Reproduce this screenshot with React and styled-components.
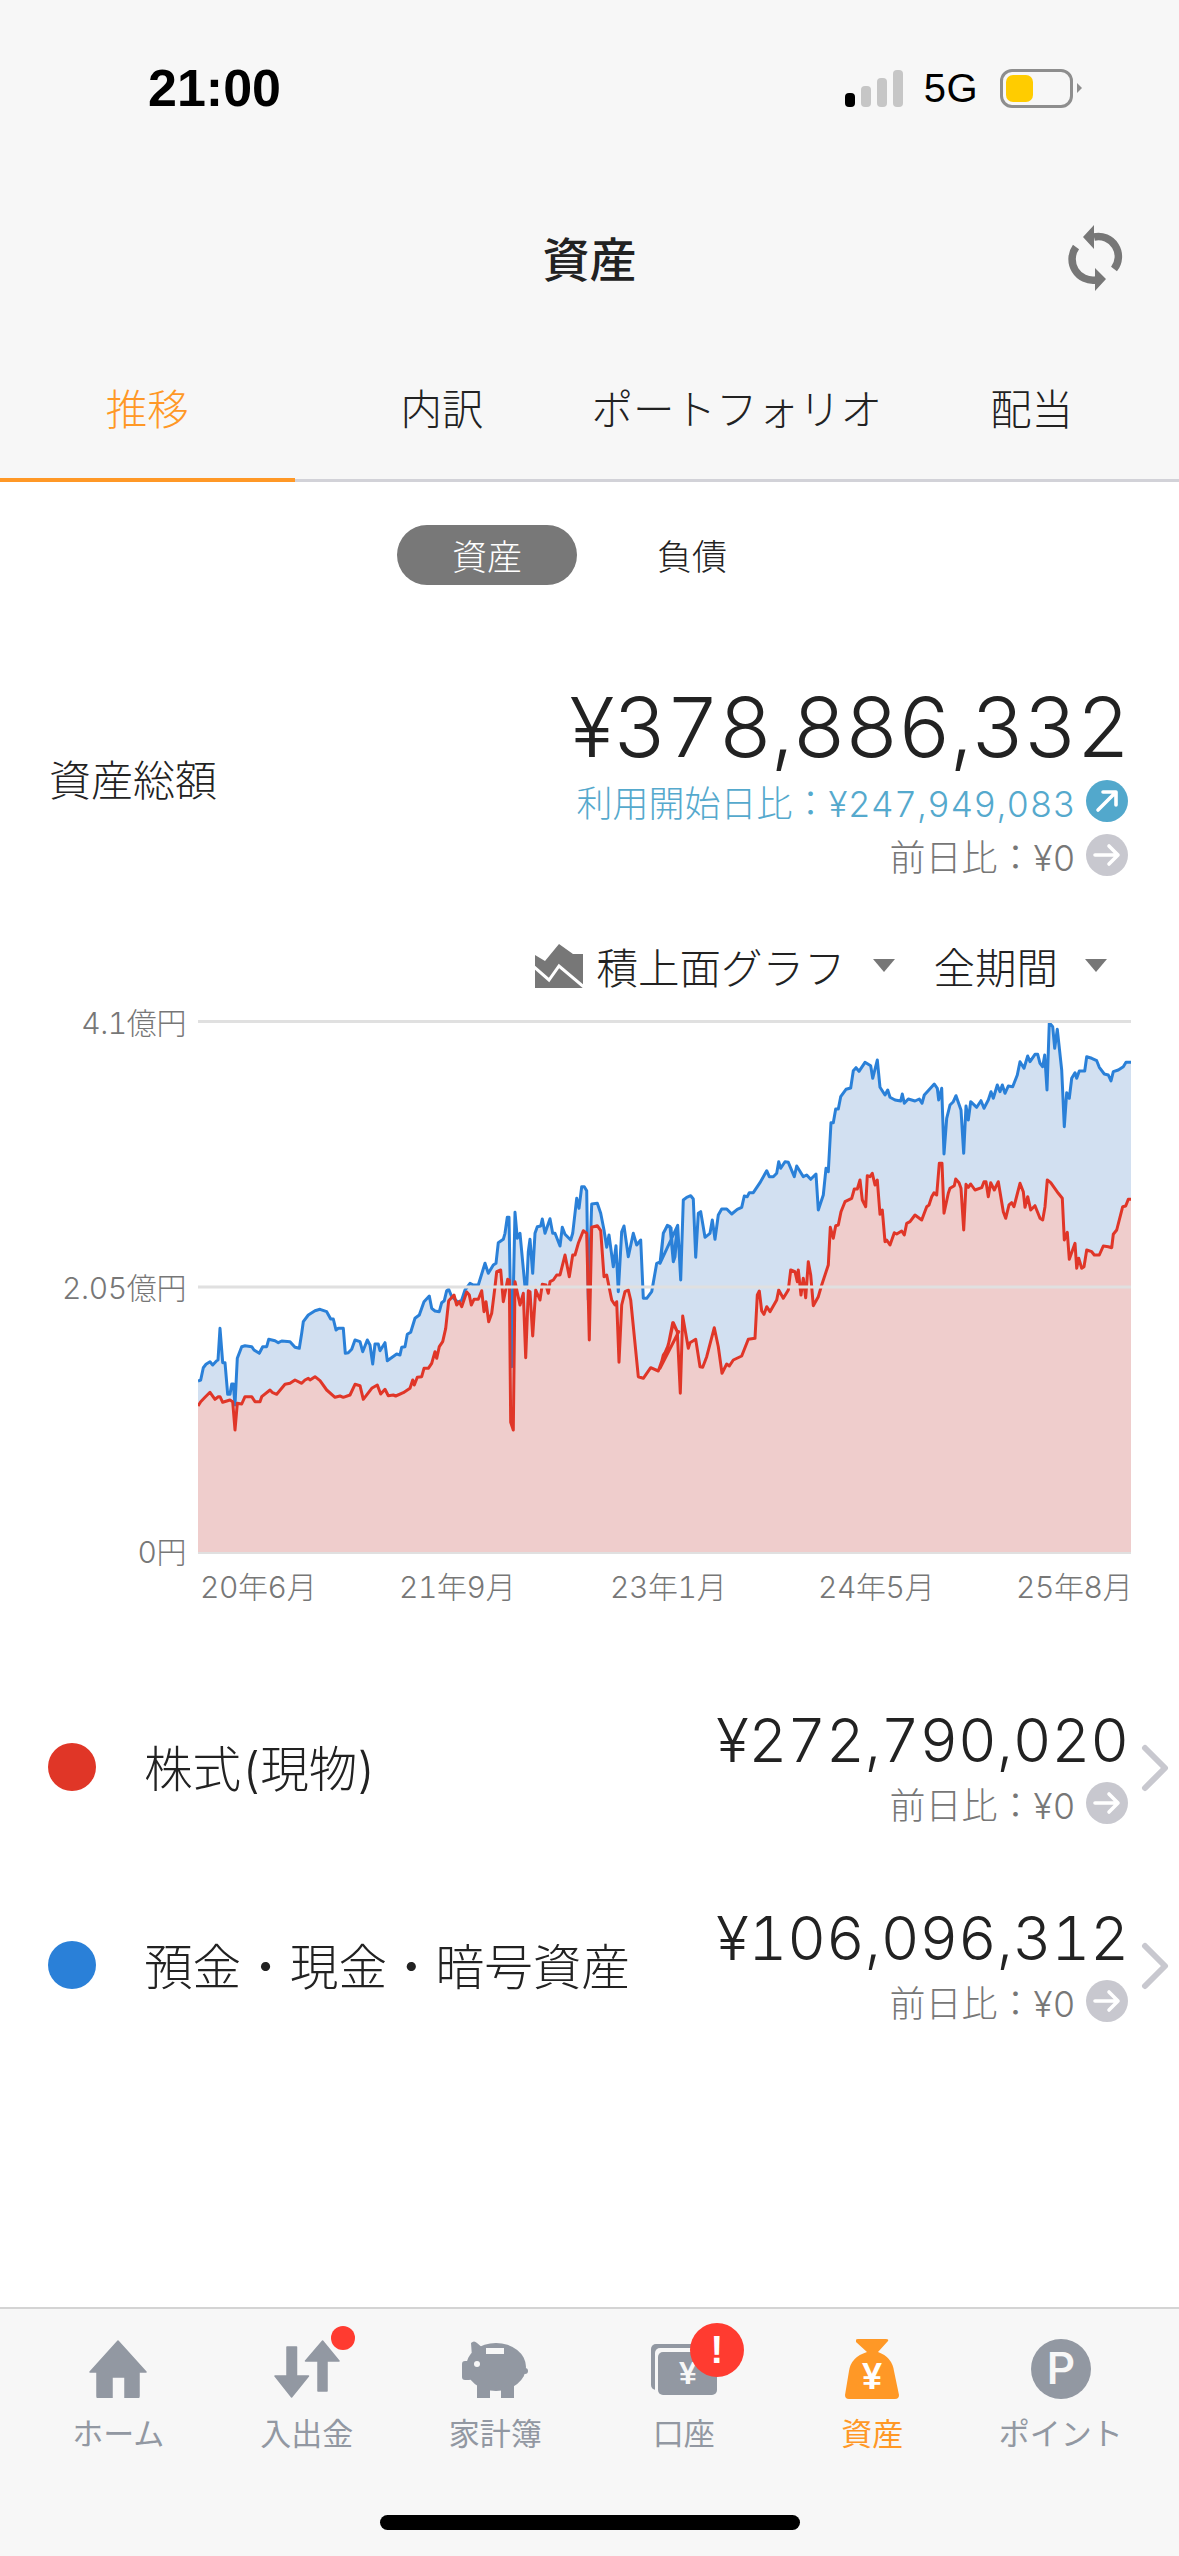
import React from "react";
import styled, { createGlobalStyle } from "styled-components";

const FONT = `Inter, "Noto Sans CJK JP", sans-serif`;
const GREY_ICON = "#9298a2";
const ORANGE = "#ff9826";
const BAR_BG = "#f7f7f7";

const Global = createGlobalStyle`
  html, body { margin: 0; padding: 0; background: #fff; }
  body { font-family: ${FONT}; font-weight: 300; color: #222; font-variant-numeric: tabular-nums; }
  * { box-sizing: border-box; }
`;

const Page = styled.div`
  width: 1179px;
  height: 2556px;
  display: flex;
  flex-direction: column;
  overflow: hidden;
  background: #fff;
`;

/* ---------- status bar ---------- */
const StatusBar = styled.div`
  height: 176px;
  flex: none;
  background: ${BAR_BG};
  display: flex;
  align-items: center;
  padding: 0 106px 0 148px;
`;
const Clock = styled.div`
  font-family: "Liberation Sans", sans-serif;
  font-weight: 700;
  font-size: 52px;
  color: #000;
  margin-right: auto;
`;
const Signal = styled.div`
  display: flex;
  align-items: flex-end;
  gap: 6px;
  height: 37px;
`;
const SignalBar = styled.span`
  width: 10px;
  height: ${(p) => p.$h}px;
  border-radius: 4px;
  background: ${(p) => (p.$on ? "#000" : "#c6c6c6")};
`;
const Network = styled.div`
  font-family: "Liberation Sans", sans-serif;
  font-size: 40px;
  letter-spacing: 0.5px;
  color: #000;
  margin: 0 22px 0 21px;
`;
const Battery = styled.div`
  width: 73px;
  height: 39px;
  border: 3px solid #8e8e8e;
  border-radius: 12px;
  padding: 3px;
  position: relative;
  &::after {
    content: "";
    position: absolute;
    left: 74px;
    top: 11px;
    border-left: 5px solid #8e8e8e;
    border-top: 5px solid transparent;
    border-bottom: 5px solid transparent;
  }
`;
const BatteryFill = styled.div`
  width: 27px;
  height: 27px;
  border-radius: 7px;
  background: #ffcc00;
`;

/* ---------- title ---------- */
const TitleBar = styled.div`
  height: 160px;
  flex: none;
  background: ${BAR_BG};
  display: grid;
  grid-template-columns: 1fr auto 1fr;
  align-items: center;
  padding: 0 39px;
`;
const Title = styled.h1`
  grid-column: 2;
  margin: 0;
  font-size: 47px;
  font-weight: 500;
  color: #222;
`;
const RefreshBtn = styled.svg`
  grid-column: 3;
  justify-self: end;
  width: 90px;
  height: 90px;
`;

/* ---------- tabs ---------- */
const Tabs = styled.div`
  height: 146px;
  flex: none;
  background: ${BAR_BG};
  display: grid;
  grid-template-columns: repeat(4, 1fr);
  border-bottom: 3px solid #d2d2d8;
`;
const Tab = styled.div`
  display: flex;
  align-items: center;
  justify-content: center;
  font-size: 41.5px;
  height: 146px;
  padding-bottom: 1px;
  white-space: nowrap;
  color: ${(p) => (p.$active ? ORANGE : "#222")};
  border-bottom: 4px solid ${(p) => (p.$active ? ORANGE : "transparent")};
`;

/* ---------- segmented ---------- */
const Segments = styled.div`
  display: flex;
  justify-content: center;
  gap: 25px;
  margin-top: 43px;
`;
const Segment = styled.div`
  width: 180px;
  height: 60px;
  padding-bottom: 2px;
  border-radius: 30px;
  display: flex;
  align-items: center;
  justify-content: center;
  font-size: 35px;
  color: ${(p) => (p.$active ? "#fff" : "#222")};
  background: ${(p) => (p.$active ? "#787878" : "transparent")};
`;

/* ---------- summary ---------- */
const Summary = styled.section`
  display: flex;
  align-items: center;
  justify-content: space-between;
  margin-top: 92px;
  padding: 0 51px 0 49px;
`;
const SummaryLabel = styled.div`
  font-size: 42px;
  color: #222;
`;
const SummaryRight = styled.div`
  display: flex;
  flex-direction: column;
  align-items: flex-end;
`;
const BigAmount = styled.div`
  font-size: 83px;
  line-height: 100px;
  letter-spacing: -1.1px;
  margin-right: -1px;
  white-space: nowrap;
  color: #222;
`;
const Delta = styled.div`
  display: flex;
  align-items: center;
  height: 46px;
  gap: 10px;
  font-size: 36px;
  white-space: nowrap;
  color: ${(p) => p.$color || "#777"};
  margin-top: ${(p) => p.$mt || 0}px;
`;
const Money = styled.span`
  font-size: 35px;
  letter-spacing: 0.5px;
`;
const DeltaCircle = styled.span`
  width: 42px;
  height: 42px;
  border-radius: 50%;
  background: ${(p) => p.$bg};
  display: flex;
  align-items: center;
  justify-content: center;
  flex: none;
`;

/* ---------- chart ---------- */
const Controls = styled.div`
  display: flex;
  align-items: center;
  justify-content: flex-end;
  height: 60px;
  margin-top: 59px;
  padding: 0 72px 3px 0;
  font-size: 41.5px;
  color: #222;
`;
const AreaIcon = styled.svg`
  width: 48px;
  height: 46px;
  margin-right: 13px;
`;
const Caret = styled.span`
  width: 0;
  height: 0;
  border-left: 11px solid transparent;
  border-right: 11px solid transparent;
  border-top: 13px solid #777;
  margin-left: ${(p) => p.$ml}px;
  margin-right: ${(p) => p.$mr}px;
`;
const ChartRow = styled.div`
  display: grid;
  grid-template-columns: 198px 933px;
  height: 561px;
  margin-top: 9px;
`;
const YAxis = styled.div`
  display: flex;
  flex-direction: column;
  justify-content: space-between;
  align-items: flex-end;
  padding: 2px 12px 0 0;
`;
const AxisText = styled.span`
  font-size: 30px;
  line-height: 30px;
  letter-spacing: -0.4px;
  color: #777;
  white-space: nowrap;
`;
const ChartSvg = styled.svg`
  width: 933px;
  height: 561px;
  display: block;
`;
const XAxis = styled.div`
  display: grid;
  grid-template-columns: 199px 211px 208px 198px auto;
  align-items: center;
  height: 40px;
  padding-left: 200px;
`;

/* ---------- asset rows ---------- */
const Assets = styled.div`
  margin-top: 59px;
`;
const AssetRow = styled.div`
  height: 198px;
  display: flex;
  align-items: center;
  padding: 0 10px 0 48px;
`;
const Dot = styled.span`
  width: 48px;
  height: 48px;
  margin-top: 4px;
  border-radius: 50%;
  flex: none;
  background: ${(p) => p.$color};
`;
const AssetName = styled.div`
  margin: 1px 0 0 48px;
  font-size: 48.6px;
  color: #222;
  white-space: nowrap;
`;
const AssetRight = styled.div`
  margin-left: auto;
  display: flex;
  flex-direction: column;
  align-items: flex-end;
`;
const AssetAmount = styled.div`
  font-size: 60px;
  line-height: 72px;
  letter-spacing: -0.1px;
  margin-right: -1px;
  white-space: nowrap;
  color: #222;
`;
const Chevron = styled.svg`
  width: 28px;
  height: 48px;
  margin: 6px 0 0 13px;
  flex: none;
`;

/* ---------- bottom nav ---------- */
const BottomNav = styled.nav`
  margin-top: auto;
  height: 249px;
  flex: none;
  background: ${BAR_BG};
  border-top: 2px solid #d4d4d4;
  display: flex;
  flex-direction: column;
  align-items: center;
  padding: 30px 24px 0;
`;
const NavItems = styled.div`
  width: 100%;
  display: grid;
  grid-template-columns: repeat(6, 1fr);
`;
const NavItem = styled.div`
  display: flex;
  flex-direction: column;
  align-items: center;
  color: ${(p) => (p.$active ? ORANGE : GREY_ICON)};
`;
const NavIcon = styled.div`
  position: relative;
  height: 60px;
  display: flex;
  align-items: center;
  justify-content: center;
`;
const NavLabel = styled.div`
  margin-top: 15px;
  font-size: 31px;
  line-height: 40px;
  font-weight: 400;
  white-space: nowrap;
`;
const RedDot = styled.span`
  position: absolute;
  left: 57px;
  top: -13px;
  width: 24px;
  height: 24px;
  border-radius: 50%;
  background: #ff3b30;
`;
const AlertBadge = styled.span`
  position: absolute;
  left: 39px;
  top: -16px;
  width: 54px;
  height: 54px;
  border-radius: 50%;
  background: #ff3b30;
  color: #fff;
  font-family: "Liberation Sans", sans-serif;
  font-weight: 700;
  font-size: 38px;
  line-height: 54px;
  text-align: center;
`;
const PointCircle = styled.div`
  width: 60px;
  height: 60px;
  border-radius: 50%;
  background: ${GREY_ICON};
  color: ${BAR_BG};
  font-family: Roboto, sans-serif;
  font-size: 44px;
  font-weight: 500;
  line-height: 60px;
  text-align: center;
`;
const HomeBar = styled.div`
  width: 420px;
  height: 15px;
  border-radius: 8px;
  background: #000;
  margin-top: 61px;
`;

/* ---------- chart data (digitised from the reference) ---------- */
const BLUE_A = [[54,1143],[62,1140],[70,1103],[78,1093],[90,1085],[98,1095],[110,1082],[114,1080],[120,985],[128,1088],[135,1088],[143,1183],[150,1183],[155,1152],[160,1152],[165,1215],[172,1075],[185,1040],[195,1037],[215,1040],[222,1050],[238,1060],[248,1040],[260,1040],[266,1018],[285,1022],[295,1028],[305,1023],[330,1025],[345,1042],[358,1045],[365,1000],[370,965],[385,945],[405,932],[420,928],[440,935],[452,957],[460,957],[468,990],[475,985],[490,985],[496,1060],[505,1058],[515,1048],[525,1020],[540,1025],[548,1055],[562,1020],[570,1035],[578,1092],[585,1032],[595,1032],[600,1052],[615,1028],[622,1082],[650,1062],[660,1065],[665,1042],[675,1040],[682,1003],[692,997],[705,955],[718,945],[732,905],[748,888],[755,925],[765,933],[778,935],[785,908],[793,902],[800,872],[806,868],[815,890],[835,907],[845,900],[855,870],[870,850],[880,855],[895,855],[915,790],[925,820],[940,795],[948,790],[955,728],[970,718],[975,700],[982,652],[987,652],[995,1100],[1005,637],[1012,715],[1020,700],[1035,860],[1040,860],[1045,755],[1050,718],[1058,820],[1065,700],[1072,680],[1082,678],[1087,657],[1095,700],[1110,656],[1118,700],[1125,700],[1140,738],[1147,682],[1155,703],[1172,720],[1178,700],[1190,595],[1197,625],[1205,560],[1213,560],[1220,572],[1225,900],[1232,700],[1235,612],[1252,610],[1262,640],[1272,690],[1280,742],[1287,705],[1300,800],[1308,737],[1315,875],[1325,695],[1332,678],[1345,770],[1360,700],[1370,735],[1382,720],[1390,895],[1400,895],[1415,875],[1430,790],[1442,785],[1450,700],[1462,676],[1470,680],[1480,785],[1493,676]];
const BLUE_B = [[0,790],[10,700],[22,677],[33,683],[40,785],[45,770],[53,677],[62,840],[70,600],[80,592],[92,587],[100,597],[107,772],[115,640],[122,635],[135,712],[150,700],[157,660],[165,718],[175,645],[185,627],[200,627],[215,642],[232,628],[245,622],[253,588],[262,590],[268,578],[280,578],[300,548],[320,512],[328,530],[340,530],[350,520],[356,485],[362,505],[375,485],[385,487],[403,530],[410,498],[430,530],[440,525],[452,538],[468,522],[475,630],[490,585],[498,505],[505,515],[513,368],[520,368],[527,327],[535,327],[542,290],[558,268],[572,264],[580,212],[588,203],[597,214],[615,187],[632,197],[638,235],[652,180],[660,262],[675,285],[683,270],[690,292],[705,300],[722,303],[727,282],[733,310],[745,297],[765,303],[778,297],[786,310],[793,285],[823,252],[832,265],[836,300],[845,265],[852,462],[860,355],[870,315],[880,305],[888,287],[903,330],[911,460],[918,318],[925,360],[932,305],[950,322],[963,302],[972,325],[985,300],[993,275],[1000,295],[1012,255],[1020,275],[1027,255],[1035,280],[1045,258],[1058,260],[1072,225],[1080,185],[1092,205],[1103,168],[1110,185],[1125,163],[1133,163],[1140,190],[1148,200],[1154,165],[1161,270],[1168,68],[1178,80],[1184,145],[1192,88],[1205,210],[1213,380],[1220,278],[1228,295],[1235,235],[1245,218],[1250,235],[1258,213],[1274,213],[1280,170],[1295,175],[1310,182],[1318,202],[1333,222],[1345,225],[1353,243],[1360,215],[1375,210],[1390,200],[1398,187],[1413,187]];
const RED_A = [[54,1218],[62,1205],[75,1192],[90,1177],[105,1198],[115,1190],[120,1190],[128,1207],[150,1200],[158,1205],[165,1290],[172,1210],[185,1212],[195,1190],[215,1190],[225,1205],[240,1205],[245,1190],[270,1170],[278,1178],[290,1183],[315,1153],[330,1150],[345,1140],[365,1150],[375,1140],[385,1135],[390,1140],[405,1130],[420,1142],[440,1170],[465,1192],[480,1188],[490,1192],[510,1185],[525,1153],[540,1157],[550,1198],[575,1165],[592,1155],[602,1182],[615,1168],[625,1187],[640,1185],[647,1188],[670,1178],[690,1165],[698,1140],[703,1155],[712,1132],[725,1130],[732,1105],[745,1105],[755,1090],[765,1055],[770,1075],[778,1040],[788,1025],[797,985],[806,902],[822,885],[830,915],[838,905],[845,920],[860,876],[868,885],[874,915],[882,898],[895,898],[905,872],[912,935],[918,905],[926,965],[935,940],[945,860],[950,815],[962,810],[970,905],[983,838],[988,840],[992,1267],[1000,1290],[1005,845],[1020,915],[1030,880],[1037,1073],[1045,872],[1050,875],[1058,1008],[1067,870],[1080,900],[1087,853],[1098,855],[1105,880],[1110,845],[1120,840],[1130,825],[1140,825],[1155,765],[1168,830],[1178,765],[1185,765],[1195,730],[1210,692],[1220,700],[1228,1020],[1235,682],[1252,677],[1262,692],[1272,830],[1280,825],[1295,900],[1305,915],[1310,905],[1317,1087],[1325,915],[1335,875],[1345,870],[1352,900],[1375,1130],[1390,1135],[1412,1103],[1435,1113],[1450,1070],[1465,1035],[1478,968],[1490,992],[1496,995]];
const RED_B = [[0,1105],[10,1065],[20,1050],[30,1015],[40,968],[52,995],[61,1180],[68,948],[85,1045],[90,1028],[107,1018],[120,1100],[128,1102],[140,1070],[163,983],[175,1040],[186,1120],[200,1092],[208,1098],[220,1080],[245,1068],[265,1018],[285,1015],[292,885],[298,873],[305,933],[312,943],[320,920],[330,935],[350,900],[356,870],[370,895],[385,870],[392,810],[405,815],[412,845],[415,810],[423,885],[430,835],[437,893],[445,785],[452,825],[460,917],[475,890],[485,855],[505,795],[511,682],[520,715],[527,677],[535,675],[543,635],[555,605],[575,595],[583,567],[592,567],[600,540],[607,600],[617,620],[622,527],[630,530],[637,520],[645,555],[652,540],[660,643],[667,630],[675,725],[680,720],[690,735],[703,698],[710,702],[725,693],[733,705],[740,670],[750,665],[765,645],[785,660],[800,620],[807,615],[815,590],[822,578],[830,585],[838,490],[846,490],[852,640],[865,580],[870,565],[883,557],[887,537],[897,548],[903,565],[911,690],[918,553],[925,562],[932,552],[945,570],[965,563],[972,545],[978,545],[985,590],[992,548],[1003,570],[1015,545],[1030,635],[1037,655],[1047,615],[1055,608],[1062,620],[1080,550],[1090,575],[1095,622],[1103,590],[1112,630],[1125,617],[1140,655],[1148,660],[1155,620],[1162,540],[1172,548],[1195,580],[1207,595],[1213,720],[1222,697],[1228,778],[1245,730],[1250,805],[1256,775],[1265,805],[1272,800],[1280,750],[1295,755],[1303,765],[1318,765],[1330,738],[1345,740],[1355,743],[1360,703],[1370,690],[1388,620],[1397,618],[1405,598],[1413,598]];

const toReal = (a, off) => a.map(([x, y]) => [180 + off + x / 3, 1000 + y / 3]);
const blue = [...toReal(BLUE_A, 0), ...toReal(BLUE_B, 480)];
const red = [...toReal(RED_A, 0), ...toReal(RED_B, 480)];
const line = (pts) => pts.map(([x, y]) => `${x.toFixed(1)},${y.toFixed(1)}`).join(" ");
const area = (pts) => `198,1553 ${line(pts)} 1131,1553`;

const Chart = () => (
  <ChartSvg viewBox="198 1006 933 561">
    <polygon points={area(blue)} fill="#d2e0f1" />
    <polygon points={area(red)} fill="#efcdcc" />
    <polyline points={line(blue)} fill="none" stroke="#2a80d8" strokeWidth="3" strokeLinejoin="round" />
    <polyline points={line(red)} fill="none" stroke="#e03628" strokeWidth="3" strokeLinejoin="round" />
    <rect x="198" y="1020" width="933" height="3" fill="#e0e0e0" />
    <rect x="198" y="1285.5" width="933" height="3" fill="#e0e0e0" />
    <rect x="198" y="1552" width="933" height="2" fill="#e0e0e0" />
  </ChartSvg>
);

const ArrowIcon = ({ up }) => (
  <svg width="28" height="28" viewBox="0 0 28 28" fill="none" stroke="#fff" strokeWidth="3.6" strokeLinecap="round" strokeLinejoin="round">
    {up ? (
      <path d="M5 23 L22 6 M10 5 H23 V18" />
    ) : (
      <path d="M2 14 H25 M16 5 L25 14 L16 23" />
    )}
  </svg>
);

const ZeroDelta = ({ mt }) => (
  <Delta $mt={mt}>
    <span>前日比：<Money>¥0</Money></span>
    <DeltaCircle $bg="#c8c8cf"><ArrowIcon /></DeltaCircle>
  </Delta>
);

const Asset = ({ color, name, amount }) => (
  <AssetRow>
    <Dot $color={color} />
    <AssetName>{name}</AssetName>
    <AssetRight>
      <AssetAmount>{amount}</AssetAmount>
      <ZeroDelta mt={4} />
    </AssetRight>
    <Chevron viewBox="0 0 28 48" fill="none" stroke="#c8c8cf" strokeWidth="6" strokeLinecap="round" strokeLinejoin="round">
      <path d="M4 4 L24 24 L4 44" />
    </Chevron>
  </AssetRow>
);

const HomeIcon = () => (
  <svg width="58" height="58" viewBox="0 0 58 58" fill={GREY_ICON}>
    <path
      d="M29 1 L57 32 H50 V56 Q50 58 48 58 H36 V37 H23 V58 H10 Q8 58 8 56 V32 H1 Z"
      stroke={GREY_ICON}
      strokeWidth="1.5"
      strokeLinejoin="round"
    />
  </svg>
);
const TransferIcon = () => (
  <svg width="66" height="58" viewBox="0 0 66 58" fill={GREY_ICON} stroke={GREY_ICON} strokeWidth="1.5" strokeLinejoin="round">
    <path d="M13 7 H22.5 V36 H34.5 L17.6 57 L1 36 H13 Z" />
    <path d="M48.6 1 L65 21 H53 V51 H44 V21 H31.5 Z" />
  </svg>
);
const PiggyIcon = () => (
  <svg width="66" height="57" viewBox="0 0 66 57" fill={GREY_ICON}>
    <ellipse cx="34" cy="26" rx="30" ry="24" />
    <rect x="0" y="20" width="10" height="19" rx="3" />
    <path d="M9 2 Q12 -1 15 2 L22 8 L10 16 Z" />
    <rect x="15" y="40" width="13" height="17" />
    <rect x="39" y="40" width="13" height="17" />
    <circle cx="63" cy="30" r="3" />
    <circle cx="15" cy="23" r="3" fill={BAR_BG} />
    <rect x="24" y="7" width="18" height="6" fill={BAR_BG} />
  </svg>
);
const WalletIcon = () => (
  <svg width="66" height="51" viewBox="0 0 66 51">
    <rect x="0" y="0" width="60" height="46" rx="5" fill={GREY_ICON} />
    <rect x="4" y="4" width="62" height="47" rx="5" fill={BAR_BG} />
    <rect x="7" y="8" width="59" height="43" rx="5" fill={GREY_ICON} />
    <text x="37" y="40" textAnchor="middle" fontFamily="Liberation Sans, sans-serif" fontWeight="700" fontSize="32" fill={BAR_BG}>¥</text>
  </svg>
);
const BagIcon = () => (
  <svg width="54" height="60" viewBox="0 0 54 60">
    <path
      d="M11 1 Q11 0 13 0 H41 Q44 0 43 2 L33 13 Q47 18 49 32 L54 56 Q54 60 50 60 H4 Q0 60 0 56 L4 32 Q6 18 22 13 L11 3 Z"
      fill={ORANGE}
    />
    <text x="27" y="50" textAnchor="middle" fontFamily="Liberation Sans, sans-serif" fontWeight="700" fontSize="36" fill="#fff">¥</text>
  </svg>
);

export default function App() {
  return (
    <Page>
      <Global />
      <StatusBar>
        <Clock>21:00</Clock>
        <Signal>
          <SignalBar $h={14} $on />
          <SignalBar $h={21} />
          <SignalBar $h={29} />
          <SignalBar $h={37} />
        </Signal>
        <Network>5G</Network>
        <Battery><BatteryFill /></Battery>
      </StatusBar>

      <TitleBar>
        <Title>資産</Title>
        <RefreshBtn viewBox="0 0 90 90" fill="none">
          <path d="M44 26 A20 20 0 0 1 64 58" stroke="#777" strokeWidth="7.5" />
          <path d="M46 69 A21 21 0 0 1 26 36" stroke="#777" strokeWidth="7.5" />
          <path d="M44 14 L33 26 L44 38 Z M45 57 L56 68 L45 80 Z" fill="#777" />
        </RefreshBtn>
      </TitleBar>

      <Tabs>
        <Tab $active>推移</Tab>
        <Tab>内訳</Tab>
        <Tab>ポートフォリオ</Tab>
        <Tab>配当</Tab>
      </Tabs>

      <Segments>
        <Segment $active>資産</Segment>
        <Segment>負債</Segment>
      </Segments>

      <Summary>
        <SummaryLabel>資産総額</SummaryLabel>
        <SummaryRight>
          <BigAmount>¥378,886,332</BigAmount>
          <Delta $color="#55a9cd" $mt={1}>
            <span>利用開始日比：<Money>¥247,949,083</Money></span>
            <DeltaCircle $bg="#52a8cc"><ArrowIcon up /></DeltaCircle>
          </Delta>
          <ZeroDelta mt={8} />
        </SummaryRight>
      </Summary>

      <Controls>
        <AreaIcon viewBox="12 13 48 46">
          <path d="M12 25 L22 31 L36 14 L50 24 H60 V58 H12 Z" fill="#777" />
          <path d="M10 36 L26 50 L36 36 L62 58" fill="none" stroke="#fff" strokeWidth="3" />
        </AreaIcon>
        積上面グラフ
        <Caret $ml={28} $mr={38} />
        全期間
        <Caret $ml={27} $mr={0} />
      </Controls>

      <ChartRow>
        <YAxis>
          <AxisText>4.1億円</AxisText>
          <AxisText>2.05億円</AxisText>
          <AxisText>0円</AxisText>
        </YAxis>
        <Chart />
      </ChartRow>
      <XAxis>
        <AxisText>20年6月</AxisText>
        <AxisText>21年9月</AxisText>
        <AxisText>23年1月</AxisText>
        <AxisText>24年5月</AxisText>
        <AxisText>25年8月</AxisText>
      </XAxis>

      <Assets>
        <Asset color="#e03627" name="株式(現物)" amount="¥272,790,020" />
        <Asset color="#2a80d8" name="預金・現金・暗号資産" amount="¥106,096,312" />
      </Assets>

      <BottomNav>
        <NavItems>
          <NavItem>
            <NavIcon><HomeIcon /></NavIcon>
            <NavLabel>ホーム</NavLabel>
          </NavItem>
          <NavItem>
            <NavIcon><TransferIcon /><RedDot /></NavIcon>
            <NavLabel>入出金</NavLabel>
          </NavItem>
          <NavItem>
            <NavIcon><PiggyIcon /></NavIcon>
            <NavLabel>家計簿</NavLabel>
          </NavItem>
          <NavItem>
            <NavIcon><WalletIcon /><AlertBadge>!</AlertBadge></NavIcon>
            <NavLabel>口座</NavLabel>
          </NavItem>
          <NavItem $active>
            <NavIcon><BagIcon /></NavIcon>
            <NavLabel>資産</NavLabel>
          </NavItem>
          <NavItem>
            <NavIcon><PointCircle>P</PointCircle></NavIcon>
            <NavLabel>ポイント</NavLabel>
          </NavItem>
        </NavItems>
        <HomeBar />
      </BottomNav>
    </Page>
  );
}
